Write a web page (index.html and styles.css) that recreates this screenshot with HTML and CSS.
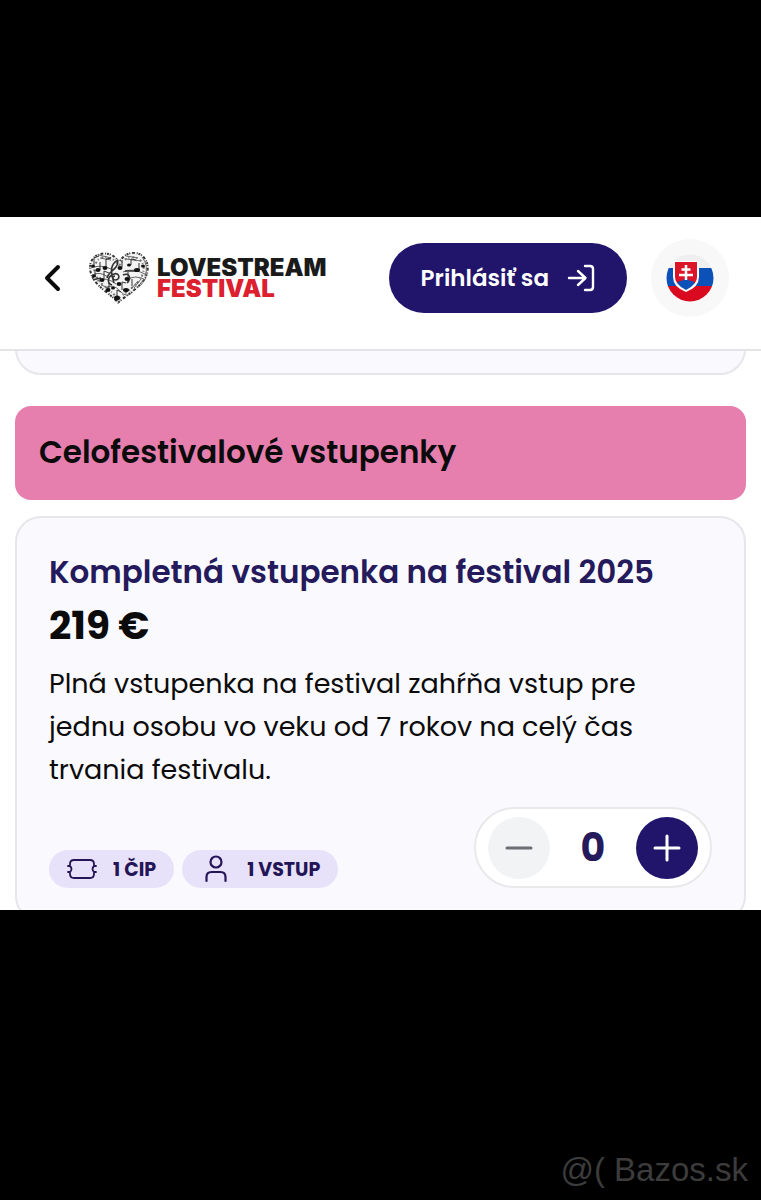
FILE: index.html
```html
<!DOCTYPE html>
<html lang="sk">
<head>
    <meta charset="UTF-8">
    <meta name="viewport" content="width=device-width, initial-scale=1.0">
    <title>Lovestream Festival - vstupenky</title>
    <link rel="stylesheet" href="styles.css">
</head>
<body>
<div class="screen">
    <header class="header">
        <a class="back" href="#" aria-label="Späť">
            <svg width="18" height="28" viewBox="0 0 18 28" fill="none" stroke="#0b0b0b" stroke-width="4" stroke-linecap="round" stroke-linejoin="round">
                <path d="M14 3 L3 14 L14 25"/>
            </svg>
        </a>
        <a class="logo" href="#">
            <svg class="heart" width="60" height="52" viewBox="0 0 60 52">
                <defs>
                    <clipPath id="heartShape">
                        <path d="M30 9 C25 -1 11 -2 4 5 C-3 13 0 24 7 32 C13 39 21 43 29 52 C37 45 47 39 54 31 C61 23 62 11 55 4 C48 -3 35 -1 30 9Z"/>
                    </clipPath>
                </defs>
                <g clip-path="url(#heartShape)">
                    <path d="M0 0H60V52H0Z" fill="#f3f3f3"/>
                    <path d="M30 9 C25 -1 11 -2 4 5 C-3 13 0 24 7 32 C13 39 21 43 29 52 C37 45 47 39 54 31 C61 23 62 11 55 4 C48 -3 35 -1 30 9Z" fill="none" stroke="#333" stroke-width="4" stroke-dasharray="2 1 1 2 3 2 1 1"/>
                    <path d="M30 14 C24 4 14 3 9 8 C3 15 5 23 11 30 C17 36 24 40 29 47 C37 40 45 35 50 29 C55 22 57 13 51 8 C45 3 35 5 30 14Z" fill="none" stroke="#777" stroke-width="2" stroke-dasharray="1 2 2 3"/>
                    <g fill="none" stroke="#666" stroke-width="1">
                        <path d="M2 16Q12 12 22 17M3 23Q11 19 19 25M8 29Q17 24 27 32M16 36Q24 31 31 39T44 40M34 20Q43 15 58 23M38 28Q46 22 57 28"/>
                        <path d="M45 36l7-9M48 36l7-9M51 35l6-9M42 37l7-8M10 3l12 3M11 6l11 2M37 4l12 2M37 7l15 2M12 33l8 3M53 5q7 9 3 19"/>
                    </g>
                    <g fill="none" stroke="#333" stroke-width="1">
                        <path d="M5 13V6l5-2M11 18V10M17 15V7l5-1M6 24v-6M15 27v-8l5 2M33 15V8M42 13V7l5 1M50 18v-7M33 38v-8l4 1M43 34v-7M28 45v-7l4 2M20 37v-7M39 26v-6"/>
                        <path d="M23 33c-6-2-4-9 2-11 5-2 7 5 2 6-4 0-4-4-1-4M25 31C22 21 21 15 26 10c3-3 4 1 1 5-3 4-8 6-9 11" stroke-width="1.600"/>
                        <path d="M36 19h14M3 28l9-2M34 23c6-3 9 3 4 8" stroke-width="1.600"/>
                    </g>
                    <g fill="#111">
                        <ellipse cx="4" cy="14" rx="2" ry="1.500"/><ellipse cx="9" cy="18" rx="2.500" ry="2"/><ellipse cx="16" cy="16" rx="2.500" ry="2"/>
                        <ellipse cx="5" cy="24" rx="2" ry="1.500"/><ellipse cx="13" cy="28" rx="2.500" ry="2"/><ellipse cx="19" cy="38" rx="2.500" ry="2"/>
                        <ellipse cx="31" cy="16" rx="2.500" ry="2"/><ellipse cx="40" cy="13" rx="2" ry="1.500"/><ellipse cx="48" cy="18" rx="3" ry="2"/>
                        <ellipse cx="54" cy="14" rx="2" ry="1.500"/><ellipse cx="30" cy="32" rx="2.500" ry="2"/><ellipse cx="38" cy="27" rx="2.500" ry="2"/>
                        <ellipse cx="37" cy="38" rx="3" ry="2"/><ellipse cx="28" cy="46" rx="3" ry="2.500"/><ellipse cx="24" cy="36" rx="2" ry="1.500"/>
                    </g>
                </g>
            </svg>
            <span class="logo-text">LOVESTREAM<span class="logo-red">FESTIVAL</span></span>
        </a>
        <button class="login" type="button">
            Prihlásiť sa
            <svg width="28" height="28" viewBox="0 0 28 28" fill="none" stroke="#fff" stroke-width="2.400" stroke-linecap="round" stroke-linejoin="round">
                <path d="M2 14H18M11 7L18.500 14L11 21M18 2H23Q26 2 26 5V23Q26 26 23 26H18"/>
            </svg>
        </button>
        <button class="lang" type="button" aria-label="Slovenčina">
            <svg width="48" height="48" viewBox="0 0 48 48">
                <defs>
                    <clipPath id="flagShape"><circle cx="24" cy="24" r="23.500"/></clipPath>
                </defs>
                <g clip-path="url(#flagShape)">
                    <path d="M0 0H48V16H0Z" fill="#efefef"/>
                    <path d="M0 14H48V32H0Z" fill="#0b51b8"/>
                    <path d="M0 32H48V48H0Z" fill="#d90a20"/>
                </g>
                <path d="M7 7H33V23Q33 33 20 38Q7 33 7 23Z" fill="#fff"/>
                <path d="M9 8H31V23Q31 26 29 29H11Q9 26 9 23Z" fill="#dc1428"/>
                <path d="M11 29Q14 26 16 27Q20 22 24 27Q26 26 29 29Q26 33 20 36Q14 33 11 29Z" fill="#0b51b8"/>
                <path d="M20 11V26M15.500 15.500H24.500M13 21H27" stroke="#fff" stroke-width="2.500"/>
            </svg>
        </button>
    </header>
    <main class="content">
        <div class="ticket ticket-prev"></div>
        <h2 class="category">Celofestivalové vstupenky</h2>
        <article class="ticket">
            <h3 class="ticket-title">Kompletná vstupenka na festival 2025</h3>
            <p class="price">219 €</p>
            <p class="description">Plná vstupenka na festival zahŕňa vstup pre jednu osobu vo veku od 7 rokov na celý čas trvania festivalu.</p>
            <div class="ticket-footer">
                <div class="badges">
                    <span class="badge">
                        <svg width="30" height="20" viewBox="0 0 30 20" fill="none" stroke="#241557" stroke-width="1.800" stroke-linejoin="round" stroke-linecap="round">
                            <path d="M7 1H23Q27 1 27 5V7H29M29 13H27V15Q27 19 23 19H7Q3 19 3 15V13H1M1 7H3V5Q3 1 7 1M3 7Q6 10 3 13M27 7Q24 10 27 13"/>
                        </svg>
                        1 ČIP
                    </span>
                    <span class="badge badge-person">
                        <svg width="22" height="28" viewBox="0 0 22 28" fill="none" stroke="#241557" stroke-width="2.200" stroke-linecap="round">
                            <circle cx="11" cy="7" r="5.500"/>
                            <path d="M1.500 26V22Q1.500 17 6.500 17H15.500Q20.500 17 20.500 22V26"/>
                        </svg>
                        1 VSTUP
                    </span>
                </div>
                <div class="counter">
                    <button class="minus" type="button" aria-label="Odobrať">
                        <svg width="28" height="28" viewBox="0 0 28 28" stroke="#6d6e73" stroke-width="3" stroke-linecap="round"><path d="M2 14H26"/></svg>
                    </button>
                    <output class="count">0</output>
                    <button class="plus" type="button" aria-label="Pridať">
                        <svg width="28" height="28" viewBox="0 0 28 28" stroke="#fff" stroke-width="3" stroke-linecap="round"><path d="M2 14H26M14 2V26"/></svg>
                    </button>
                </div>
            </div>
        </article>
    </main>
</div>
<div class="watermark">@( Bazos.sk</div>
</body>
</html>
```

FILE: styles.css
```css
* {
    box-sizing: border-box;
}
body {
    margin: 0;
    min-height: 100vh;
    padding-top: 217px;
    display: flex;
    flex-direction: column;
    background-color: #000;
    font-family: Poppins, Inter, sans-serif;
    color: #0b0b0b;
}
h2, h3, p {
    margin: 0;
}
svg {
    display: block;
    flex-shrink: 0;
}
button {
    border: none;
    padding: 0;
    font-family: inherit;
    cursor: pointer;
    display: flex;
    align-items: center;
    justify-content: center;
    flex-shrink: 0;
}
.screen {
    background-color: #fff;
    overflow: hidden;
}
.header {
    display: flex;
    align-items: center;
    padding: 22px 32px 32px 44px;
    border-bottom: 2px solid #e4e4e7;
    background-color: #fff;
    position: relative;
}
.back {
    margin-right: 27px;
}
.logo {
    display: flex;
    align-items: center;
    gap: 8px;
    margin-right: auto;
    text-decoration: none;
}
.logo-text {
    font-family: Inter, sans-serif;
    font-size: 24px;
    line-height: 21px;
    font-weight: 900;
    color: #1a1a1a;
}
.logo-red {
    display: block;
    color: #dc202e;
}
.login {
    height: 70px;
    padding: 0 32px;
    gap: 18px;
    border-radius: 35px;
    background-color: #21146b;
    color: #fff;
    font-size: 23px;
    font-weight: 600;
}
.lang {
    width: 78px;
    height: 78px;
    margin-left: 24px;
    border-radius: 50%;
    background-color: #f8f8f8;
}
.content {
    padding: 0 15px;
}
.ticket {
    border: 2px solid #e6e6eb;
    border-radius: 26px;
    background-color: #f9f9fe;
    padding: 32px;
    margin-bottom: -12px;
}
.ticket-prev {
    margin-top: -44px;
    margin-bottom: 31px;
}
.category {
    padding: 22px 24px 24px;
    margin-bottom: 16px;
    border-radius: 16px;
    background-color: #e67fae;
    font-size: 31px;
    line-height: 48px;
    font-weight: 600;
}
.ticket-title {
    margin-bottom: 2px;
    font-size: 31px;
    line-height: 44px;
    font-weight: 600;
    color: #241a5c;
}
.price {
    font-size: 39px;
    line-height: 60px;
    font-weight: 700;
}
.description {
    padding-top: 6px;
    font-size: 27px;
    line-height: 43px;
}
.ticket-footer {
    display: flex;
    align-items: flex-end;
    justify-content: space-between;
    padding-top: 16px;
}
.badges {
    display: flex;
    gap: 8px;
}
.badge {
    display: flex;
    align-items: center;
    gap: 16px;
    height: 38px;
    padding: 0 18px;
    border-radius: 19px;
    background-color: #e7e2f9;
    color: #241557;
    font-size: 19px;
    font-weight: 700;
}
.badge-person {
    gap: 20px;
    padding-left: 23px;
}
.counter {
    display: flex;
    align-items: center;
    justify-content: space-between;
    width: 238px;
    height: 81px;
    padding: 0 12px;
    border: 2px solid #e9e9ec;
    border-radius: 41px;
    background-color: #fff;
}
.counter button {
    width: 62px;
    height: 62px;
    border-radius: 50%;
}
.counter .minus {
    background-color: #f2f3f5;
}
.counter .plus {
    background-color: #21146b;
}
.count {
    color: #241a5c;
    font-size: 38px;
    font-weight: 700;
}
.watermark {
    margin-top: auto;
    padding: 0 13px 10px;
    text-align: right;
    font-family: "Liberation Sans", Arial, sans-serif;
    font-size: 33px;
    line-height: 40px;
    color: #3c3c3c;
}
```
